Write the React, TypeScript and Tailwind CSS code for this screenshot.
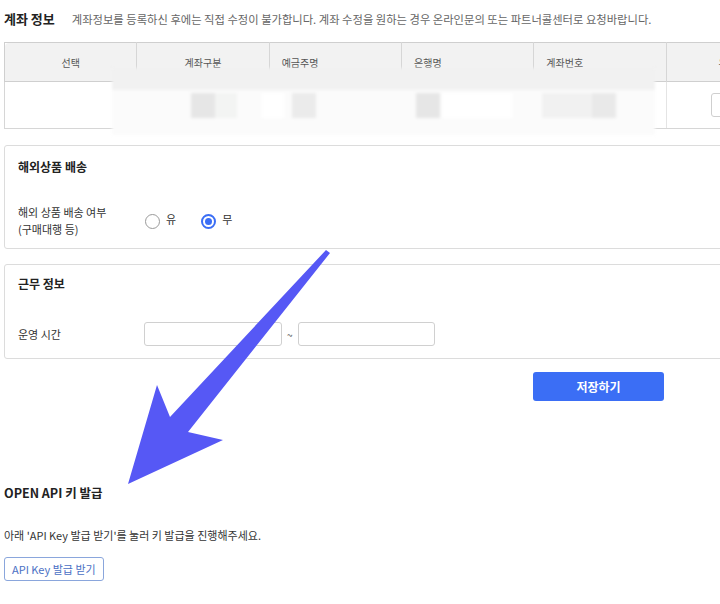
const font = { fontFamily: '"Noto Sans CJK KR", "Noto Sans", sans-serif' };

const headers = ["선택", "계좌구분", "예금주명", "은행명", "계좌번호", "유효성"];

function Radio({ checked, label }: { checked?: boolean; label: string }) {
  return (
    <label className="flex items-center gap-[6px]">
      {checked ? (
        <span className="w-[15px] h-[15px] rounded-full border-2 border-[#3b6ef5] flex items-center justify-center">
          <span className="w-[7px] h-[7px] rounded-full bg-[#3b6ef5]" />
        </span>
      ) : (
        <span className="w-[15px] h-[15px] rounded-full border border-[#9a9a9a] bg-white" />
      )}
      <span className="text-[11px] text-[#333] -mt-[4px]">{label}</span>
    </label>
  );
}

export default function App() {
  return (
    <div className="relative w-[720px] h-[604px] overflow-hidden bg-white text-[#222]" style={font}>
      <div className="pl-[4px] pt-[9px]">
        {/* 계좌 정보 */}
        <div className="flex items-center h-[20px]">
          <h2 className="text-[13px] font-bold text-[#222]">계좌 정보</h2>
          <p className="ml-[17px] text-[11.3px] text-[#666] whitespace-nowrap">
            계좌정보를 등록하신 후에는 직접 수정이 불가합니다. 계좌 수정을 원하는 경우 온라인문의 또는 파트너콜센터로 요청바랍니다.
          </p>
        </div>

        <div className="relative mt-[13px] w-[800px]">
          <table className="w-[795px] border-collapse table-fixed text-[10px] text-[#555]">
            <thead>
              <tr className="h-[39px] bg-[#f2f2f2]">
                {headers.map((h, i) => (
                  <th
                    key={h}
                    className={
                      "font-normal border-t border-[#cfcfcf] border-r border-r-[#d6d6d6] first:border-l first:rounded-tl " +
                      (i === 2 || i === 3 || i === 4 ? "text-left pl-[12px]" : "text-center")
                    }
                  >
                    {h}
                  </th>
                ))}
              </tr>
            </thead>
            <tbody>
              <tr className="h-[47px]">
                {headers.map((h, i) => (
                  <td key={h} className="border-b border-[#d6d6d6] border-t border-t-[#cfcfcf] first:border-l border-r border-r-[#e4e4e4]">
                    {i === 5 && (
                      <div className="ml-[44px] w-[60px] h-[24px] border border-[#cfcfcf] rounded-[3px] bg-white" />
                    )}
                  </td>
                ))}
              </tr>
            </tbody>
          </table>

          {/* blurred area */}
          <div className="absolute left-[108px] top-[26px] w-[543px] h-[67px] blur-[1.5px]">
            <div className="h-[22px] bg-[#f1f1f1]" />
            <div className="h-[45px] bg-[#fbfbfb] relative">
              <div className="absolute left-[79px] top-[3px] w-[24px] h-[25px] bg-[#e6e6e6]" />
              <div className="absolute left-[103px] top-[3px] w-[22px] h-[25px] bg-[#f3f4f3]" />
              <div className="absolute left-[150px] top-[3px] w-[22px] h-[25px] bg-white" />
              <div className="absolute left-[180px] top-[3px] w-[24px] h-[25px] bg-[#ebebeb]" />
              <div className="absolute left-[304px] top-[3px] w-[24px] h-[25px] bg-[#e6e6e6]" />
              <div className="absolute left-[330px] top-[3px] w-[70px] h-[25px] bg-white" />
              <div className="absolute left-[430px] top-[3px] w-[50px] h-[25px] bg-[#f1f1f1]" />
              <div className="absolute left-[480px] top-[3px] w-[24px] h-[25px] bg-[#e9e9e9]" />
            </div>
          </div>
        </div>

        {/* 해외상품 배송 */}
        <section className="mt-[16px] w-[730px] h-[104px] border border-[#dcdcdc] rounded-[3px] pl-[13px] pt-[11px]">
          <h3 className="text-[12px] font-bold leading-[20px] text-[#222]">해외상품 배송</h3>
          <div className="mt-[27px] flex items-center">
            <div className="w-[127px] text-[11px] leading-[17px] text-[#333]">
              해외 상품 배송 여부
              <br />
              (구매대행 등)
            </div>
            <div className="flex items-center gap-[25px]">
              <Radio label="유" />
              <Radio checked label="무" />
            </div>
          </div>
        </section>

        {/* 근무 정보 */}
        <section className="mt-[15px] w-[730px] h-[95px] border border-[#dcdcdc] rounded-[3px] pl-[13px] pt-[9px]">
          <h3 className="text-[12px] font-bold leading-[20px] text-[#222]">근무 정보</h3>
          <div className="mt-[28px] flex items-center">
            <div className="w-[126px] text-[11px] text-[#333]">운영 시간</div>
            <div className="w-[138px] h-[24px] border border-[#d0d0d0] rounded-[3px]" />
            <span className="mx-[5px] text-[10px] text-[#555]">~</span>
            <div className="w-[137px] h-[24px] border border-[#d0d0d0] rounded-[3px]" />
          </div>
        </section>

        <div className="mt-[13px] w-[660px] flex justify-end">
          <button className="w-[131px] h-[29px] rounded-[3px] bg-[#3b6ef5] text-white text-[12px] font-bold">
            저장하기
          </button>
        </div>

        {/* OPEN API */}
        <h3 className="mt-[82px] text-[12.5px] font-bold leading-[20px] text-[#222]">OPEN API 키 발급</h3>
        <p className="mt-[24px] text-[11px] text-[#333] leading-[16px]">
          아래 'API Key 발급 받기'를 눌러 키 발급을 진행해주세요.
        </p>
        <button className="mt-[14px] h-[24px] px-[7px] border border-[#8aa6dc] rounded-[3px] text-[11px] text-[#4a6fc4] bg-white">
          API Key 발급 받기
        </button>
      </div>

      {/* arrow annotation */}
      <svg className="absolute inset-0 pointer-events-none" width="720" height="604" viewBox="0 0 720 604">
        <polygon
          points="326,250 330,253 188,432 223,440 128,484 157,385 170,417"
          fill="#5658f5"
        />
      </svg>
    </div>
  );
}
